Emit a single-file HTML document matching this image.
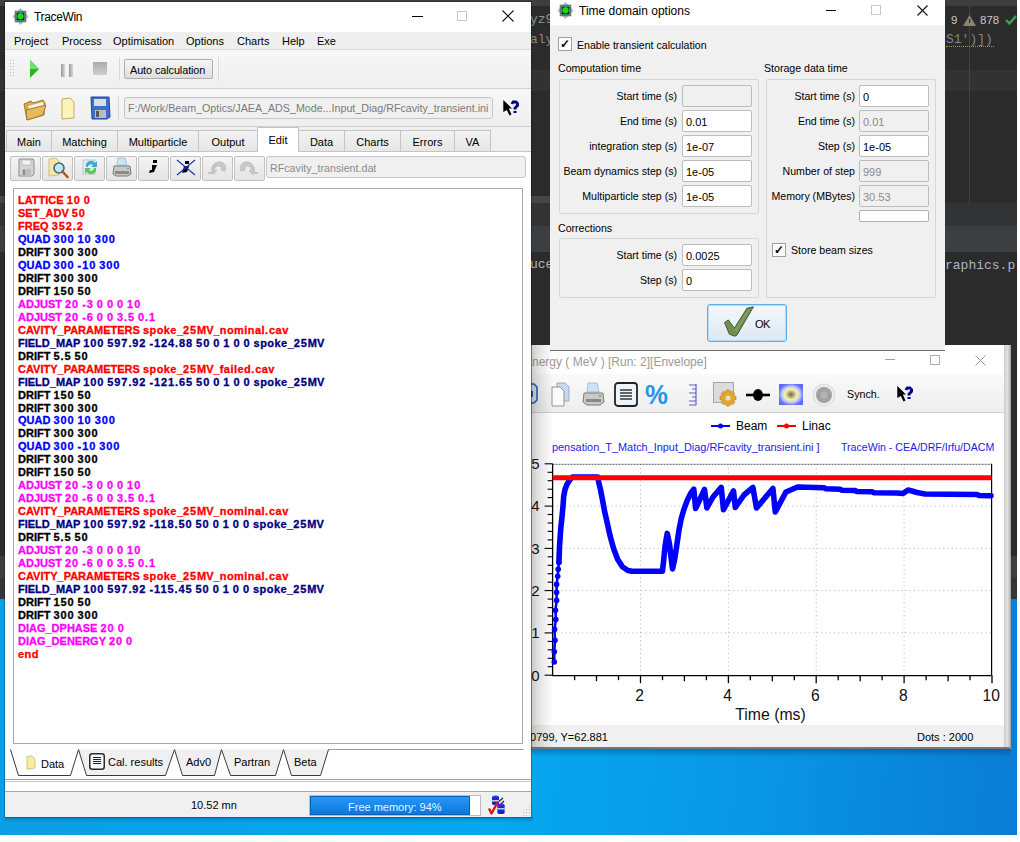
<!DOCTYPE html>
<html><head><meta charset="utf-8">
<style>
*{margin:0;padding:0;box-sizing:border-box}
html,body{width:1020px;height:842px;overflow:hidden;background:#fff;font-family:"Liberation Sans",sans-serif;font-size:11px;color:#000}
.a{position:absolute}
.t{position:absolute;white-space:nowrap;line-height:1}
#ide{left:0;top:0;width:1017px;height:599px;background:#2b2b2b}
#desk{left:0;top:599px;width:1017px;height:236px;background:linear-gradient(95deg,#0a9ee6 0%,#06a8f0 50%,#0898e6 72%,#0a7cd6 100%)}
/* main window */
#mw{left:5px;top:2px;width:526px;height:815px;background:#f0f0f0;box-shadow:0 0 0 1px rgba(0,0,0,.25)}
.btn{position:absolute;background:linear-gradient(#f6f6f6,#dedede);border:1px solid #adadad;border-radius:2px}
.field{position:absolute;background:#f0f0f0;border:1px solid #c5c5c5;border-radius:3px}
.inp{position:absolute;background:#fff;border:1px solid #bcbcbc;border-radius:2px;font-size:11px;padding-left:3px;line-height:22px}
.inp.dis{background:#f0f0f0;color:#8a8a8a}
.tab{position:absolute;top:128px;height:21px;background:linear-gradient(#f2f2f2,#e6e6e6);border:1px solid #c4c4c4;border-bottom:none;text-align:center;line-height:22px;font-size:11px}
.tbb{position:absolute;top:154px;width:31px;height:25px;background:linear-gradient(#f4f4f4,#e4e4e4);border:1px solid #c2c2c2;border-radius:2px}
#ed{left:13px;top:188px;width:510px;height:556px;background:#fff;border:1px solid #a8a8a8;font-weight:bold;font-size:11px;-webkit-text-stroke:.3px currentColor}
#ed i{font-style:normal}#ed i.l{letter-spacing:.45px}#ed i.d{letter-spacing:.9px}
#ed div{height:12.97px;line-height:12.97px;white-space:nowrap}
.r{color:#ff0000}.b{color:#0000ff}.k{color:#000}.n{color:#000080}.m{color:#ff00ff}
/* dialog */
#dlg{left:550px;top:0;width:395px;height:351px;background:#f0f0f0;border-bottom:1px solid #6e6e6e}
.lbl{position:absolute;text-align:right;white-space:nowrap;font-size:10.6px;line-height:23px}
.gb{position:absolute;border:1px solid #d6d6d6;border-radius:2px}
.cb{position:absolute;width:14px;height:14px;background:#fff;border:1px solid #a0a0a0}
/* chart */
#cw{left:531px;top:351px;width:474px;height:397px;background:#fff}
</style></head><body>
<div id="ide" class="a"></div>
<div class="a" style="left:0;top:0;width:1017px;height:6px;background:#3c3f41"></div>
<div class="a" style="left:0;top:70px;width:1017px;height:21px;background:#323232"></div>
<div class="a" style="left:0;top:196px;width:550px;height:7px;background:#464646"></div>
<div class="a" style="left:0;top:203px;width:1017px;height:23px;background:#313335"></div>
<div class="a" style="left:0;top:226px;width:1017px;height:26px;background:#3c3f41"></div>
<div class="a" style="left:0;top:556px;width:1017px;height:22px;background:#3c3f41"></div>
<div class="a" style="left:0;top:578px;width:1017px;height:21px;background:#333537"></div>
<div class="a" style="left:969px;top:6px;width:1px;height:197px;background:#444"></div>
<div class="t" style="left:530px;top:13px;font-family:'Liberation Mono',monospace;font-size:13px;color:#8a9a8a">yz9</div>
<div class="t" style="left:530px;top:33px;font-family:'Liberation Mono',monospace;font-size:13px;color:#8a8a7a">aly</div>
<div class="t" style="left:530px;top:258px;font-family:'Liberation Mono',monospace;font-size:13px;color:#a9b7c6">uce</div>
<div class="t" style="left:945px;top:259px;font-family:'Liberation Mono',monospace;font-size:13px;color:#a9b7c6">raphics.p</div>
<div class="t" style="left:946px;top:33px;font-family:'Liberation Mono',monospace;font-size:13px;color:#7f8a7f">S1')])</div>
<div class="a" style="left:946px;top:46px;width:48px;height:2px;border-top:1px dotted #9a9a5a"></div>
<div class="t" style="left:951px;top:15px;font-size:11.5px;color:#c8c8c8">9</div>
<svg class="a" style="left:963px;top:15px" width="13" height="11"><path d="M6.5 0L13 11H0Z" fill="#8c8470"/><rect x="6" y="4" width="1.2" height="4" fill="#2b2b2b"/></svg>
<div class="t" style="left:980px;top:15px;font-size:11.5px;color:#c8c8c8">878</div>
<svg class="a" style="left:1005px;top:14px" width="12" height="12"><path d="M1 6L4.5 9.5L11 2" stroke="#3fa34d" stroke-width="2.4" fill="none"/></svg>
<div id="desk" class="a"></div>

<div class="a" style="left:531px;top:749px;width:480px;height:8px;background:linear-gradient(rgba(0,20,60,.28),rgba(0,20,60,0))"></div>
<div class="a" style="left:5px;top:817px;width:528px;height:6px;background:linear-gradient(rgba(0,20,60,.22),rgba(0,20,60,0))"></div>
<!-- CHART WINDOW -->
<div class="a" style="left:531px;top:345px;width:480px;height:404px;background:#a8a8a8"></div>
<div class="a" style="left:1004px;top:345px;width:6px;height:403px;background:linear-gradient(90deg,#c9c9c9,#e4e4e4 50%,#bdbdbd)"></div>
<div class="a" style="left:531px;top:345px;width:473px;height:29px;background:#fff"></div>
<div class="t" style="left:524px;top:356px;font-size:12px;color:#9a9a9a">Energy ( MeV ) [Run: 2][Envelope]</div>
<div class="a" style="left:885px;top:359px;width:10px;height:1px;background:#a0a0a0"></div>
<div class="a" style="left:930px;top:355px;width:10px;height:10px;border:1px solid #b0b0b0"></div>
<svg class="a" style="left:975px;top:355px" width="11" height="11"><path d="M0.5 0.5L10.5 10.5M10.5 0.5L0.5 10.5" stroke="#9a9a9a" stroke-width="1"/></svg>
<div class="a" style="left:531px;top:374px;width:473px;height:38px;background:linear-gradient(#fafafa,#eeeeee)"></div>
<div class="a" style="left:531px;top:412px;width:473px;height:1px;background:#cfcfcf"></div>
<div class="a" style="left:531px;top:413px;width:473px;height:312px;background:#fff"></div>
<div class="a" style="left:531px;top:725px;width:473px;height:22px;background:#f0f0f0"></div>
<div class="a" style="left:531px;top:747px;width:479px;height:2px;background:#777"></div>
<!-- chart toolbar icons -->
<svg class="a" style="left:531px;top:383px" width="7" height="21" viewBox="0 0 7 21"><path d="M-10 1H3L6 4V17L3 20H-10Z" fill="#dfe8f6" stroke="#2f5fc0" stroke-width="1.6"/><rect x="-10" y="8" width="12" height="6" fill="#2f5fc0"/></svg>
<svg class="a" style="left:551px;top:382px" width="19" height="25" viewBox="0 0 19 25"><path d="M6 1L14 1L18 5L18 19L6 19Z" fill="#c7d8ef" stroke="#8aa0c0" stroke-width=".8"/><path d="M1 5L9 5L13 9L13 24L1 24Z" fill="#fafafa" stroke="#8a8a8a" stroke-width=".9"/></svg>
<svg class="a" style="left:582px;top:382px" width="23" height="25" viewBox="0 0 23 25"><path d="M6 1L15 1L17 10L5 10Z" fill="#cde4f6" stroke="#8fb0cc" stroke-width=".7"/><path d="M2 11L21 11L22 20L18 23L5 23L1 20Z" fill="#c9c9c9" stroke="#6f6f6f" stroke-width=".9"/><rect x="4" y="17" width="15" height="3" fill="#888"/><rect x="17" y="13" width="2" height="1.5" fill="#3c3"/></svg>
<svg class="a" style="left:614px;top:382px" width="24" height="25" viewBox="0 0 24 25"><rect x="1" y="1" width="22" height="23" rx="3" fill="#eef4fb" stroke="#222" stroke-width="1.8"/><path d="M6 8H18M6 11H18M6 14H18M6 17H18" stroke="#333" stroke-width="1.6"/></svg>
<div class="t" style="left:645px;top:381px;font-size:28px;font-weight:bold;color:#2196e8;letter-spacing:-1px;transform:scaleX(.92);transform-origin:left">%</div>
<svg class="a" style="left:687px;top:383px" width="11" height="23" viewBox="0 0 11 23"><path d="M9 1V22M2 2H9M5 6H9M2 10H9M5 14H9M2 18H9M2 22H9" stroke="#6060c8" stroke-width="1.2" fill="none"/></svg>
<svg class="a" style="left:713px;top:382px" width="24" height="25" viewBox="0 0 24 25"><rect x="0.5" y="0.5" width="20" height="20" fill="#dcdcdc" stroke="#98a8b8"/><g transform="translate(15 16)"><path d="M-1.6 -8H1.6L2.2 -5.6L4.4 -6.8L6.8 -4.4L5.6 -2.2L8 -1.6V1.6L5.6 2.2L6.8 4.4L4.4 6.8L2.2 5.6L1.6 8H-1.6L-2.2 5.6L-4.4 6.8L-6.8 4.4L-5.6 2.2L-8 1.6V-1.6L-5.6 -2.2L-6.8 -4.4L-4.4 -6.8L-2.2 -5.6Z" fill="#e6a628" stroke="#b07818" stroke-width=".6"/><circle r="2.6" fill="#dcdcdc"/></g></svg>
<svg class="a" style="left:746px;top:388px" width="25" height="14" viewBox="0 0 25 14"><path d="M0 7H24" stroke="#000" stroke-width="2.6"/><ellipse cx="12" cy="7" rx="5" ry="6" fill="#000"/></svg>
<svg class="a" style="left:779px;top:384px" width="24" height="21" viewBox="0 0 24 21"><defs><radialGradient id="g1" cx=".5" cy=".5" r=".6"><stop offset="0" stop-color="#6a6a6a"/><stop offset=".22" stop-color="#b8b070"/><stop offset=".42" stop-color="#f8f4a8"/><stop offset=".62" stop-color="#c8ccf4"/><stop offset=".85" stop-color="#6a78f8"/><stop offset="1" stop-color="#5a6af8"/></radialGradient></defs><rect x="0" y="0" width="24" height="21" fill="url(#g1)"/></svg>
<svg class="a" style="left:812px;top:383px" width="24" height="24" viewBox="0 0 24 24"><circle cx="12" cy="12" r="11" fill="#ececec" stroke="#dadada"/><circle cx="12" cy="12" r="8" fill="#a2a2a2"/><circle cx="12" cy="12" r="3.5" fill="#b4b4b4"/></svg>
<div class="t" style="left:847px;top:389px;font-size:10.7px">Synch.</div>
<svg class="a" style="left:894px;top:384px" width="22" height="20" viewBox="0 0 22 20"><path d="M3.3 2L12 10.5L8.8 10.5L11.5 16.5L9.5 17.6L6.8 12L3.3 14Z" fill="#000"/><path d="M10.5 5.5L12.5 2.5H16.5L19 5V8L16.5 10.5V11.5H13.5V9.5L16 7V5.5H13.5V6.5Z" fill="#00008a"/><rect x="13.5" y="13" width="3" height="2" fill="#00008a"/></svg>
<!-- legend & titles -->
<svg class="a" style="left:711px;top:421px" width="20" height="10"><path d="M0 5H19" stroke="#0000ff" stroke-width="2"/><circle cx="9.5" cy="5" r="2.5" fill="#0000ff"/></svg>
<div class="t" style="left:736px;top:420px;font-size:12px">Beam</div>
<svg class="a" style="left:777px;top:421px" width="20" height="10"><path d="M0 5H19" stroke="#ff0000" stroke-width="2"/><circle cx="9.5" cy="5" r="2.5" fill="#ff0000"/></svg>
<div class="t" style="left:802px;top:420px;font-size:12px">Linac</div>
<div class="t" style="left:552px;top:442px;font-size:10.9px;color:#1a1ae6">pensation_T_Match_Input_Diag/RFcavity_transient.ini ]</div>
<div class="t" style="left:841px;top:442px;font-size:10.6px;color:#1a1ae6">TraceWin - CEA/DRF/Irfu/DACM</div>
<!-- PLOT -->
<svg class="a" style="left:0;top:0" width="1020" height="842" viewBox="0 0 1020 842">
<path d="M640.5 463.8V675.2" stroke="#bdbdbd" stroke-width="1" stroke-dasharray="1.2 3"/>
<path d="M728.4 463.8V675.2" stroke="#bdbdbd" stroke-width="1" stroke-dasharray="1.2 3"/>
<path d="M816.2 463.8V675.2" stroke="#bdbdbd" stroke-width="1" stroke-dasharray="1.2 3"/>
<path d="M904.1 463.8V675.2" stroke="#bdbdbd" stroke-width="1" stroke-dasharray="1.2 3"/>
<path d="M552.6 632.9H991.6" stroke="#bdbdbd" stroke-width="1" stroke-dasharray="1.2 3"/>
<path d="M552.6 590.6H991.6" stroke="#bdbdbd" stroke-width="1" stroke-dasharray="1.2 3"/>
<path d="M552.6 548.4H991.6" stroke="#bdbdbd" stroke-width="1" stroke-dasharray="1.2 3"/>
<path d="M552.6 506.1H991.6" stroke="#bdbdbd" stroke-width="1" stroke-dasharray="1.2 3"/>
<path d="M552.6 464.3H991.6" stroke="#555" stroke-width="1" stroke-dasharray="2 1"/>
<path d="M991.6 463.8V675.2" stroke="#000" stroke-width="1.2"/>
<path d="M552.6 463.8V675.7H991.6" stroke="#000" stroke-width="1.3" fill="none"/>
<path d="M544.6 675.2H552.6" stroke="#000" stroke-width="1.1"/>
<path d="M547.6 666.7H552.6" stroke="#000" stroke-width="1.1"/>
<path d="M547.6 658.3H552.6" stroke="#000" stroke-width="1.1"/>
<path d="M547.6 649.8H552.6" stroke="#000" stroke-width="1.1"/>
<path d="M547.6 641.4H552.6" stroke="#000" stroke-width="1.1"/>
<path d="M544.6 632.9H552.6" stroke="#000" stroke-width="1.1"/>
<path d="M547.6 624.5H552.6" stroke="#000" stroke-width="1.1"/>
<path d="M547.6 616.0H552.6" stroke="#000" stroke-width="1.1"/>
<path d="M547.6 607.6H552.6" stroke="#000" stroke-width="1.1"/>
<path d="M547.6 599.1H552.6" stroke="#000" stroke-width="1.1"/>
<path d="M544.6 590.6H552.6" stroke="#000" stroke-width="1.1"/>
<path d="M547.6 582.2H552.6" stroke="#000" stroke-width="1.1"/>
<path d="M547.6 573.7H552.6" stroke="#000" stroke-width="1.1"/>
<path d="M547.6 565.3H552.6" stroke="#000" stroke-width="1.1"/>
<path d="M547.6 556.8H552.6" stroke="#000" stroke-width="1.1"/>
<path d="M544.6 548.4H552.6" stroke="#000" stroke-width="1.1"/>
<path d="M547.6 539.9H552.6" stroke="#000" stroke-width="1.1"/>
<path d="M547.6 531.4H552.6" stroke="#000" stroke-width="1.1"/>
<path d="M547.6 523.0H552.6" stroke="#000" stroke-width="1.1"/>
<path d="M547.6 514.5H552.6" stroke="#000" stroke-width="1.1"/>
<path d="M544.6 506.1H552.6" stroke="#000" stroke-width="1.1"/>
<path d="M547.6 497.6H552.6" stroke="#000" stroke-width="1.1"/>
<path d="M547.6 489.2H552.6" stroke="#000" stroke-width="1.1"/>
<path d="M547.6 480.7H552.6" stroke="#000" stroke-width="1.1"/>
<path d="M547.6 472.3H552.6" stroke="#000" stroke-width="1.1"/>
<path d="M544.6 463.8H552.6" stroke="#000" stroke-width="1.1"/>
<path d="M574.6 675.2V680.2" stroke="#000" stroke-width="1.3"/>
<path d="M596.5 675.2V681.2" stroke="#000" stroke-width="1.3"/>
<path d="M618.5 675.2V680.2" stroke="#000" stroke-width="1.3"/>
<path d="M640.5 675.2V683.2" stroke="#000" stroke-width="1.3"/>
<path d="M662.5 675.2V680.2" stroke="#000" stroke-width="1.3"/>
<path d="M684.4 675.2V681.2" stroke="#000" stroke-width="1.3"/>
<path d="M706.4 675.2V680.2" stroke="#000" stroke-width="1.3"/>
<path d="M728.4 675.2V683.2" stroke="#000" stroke-width="1.3"/>
<path d="M750.3 675.2V680.2" stroke="#000" stroke-width="1.3"/>
<path d="M772.3 675.2V681.2" stroke="#000" stroke-width="1.3"/>
<path d="M794.3 675.2V680.2" stroke="#000" stroke-width="1.3"/>
<path d="M816.2 675.2V683.2" stroke="#000" stroke-width="1.3"/>
<path d="M838.2 675.2V680.2" stroke="#000" stroke-width="1.3"/>
<path d="M860.2 675.2V681.2" stroke="#000" stroke-width="1.3"/>
<path d="M882.1 675.2V680.2" stroke="#000" stroke-width="1.3"/>
<path d="M904.1 675.2V683.2" stroke="#000" stroke-width="1.3"/>
<path d="M926.1 675.2V680.2" stroke="#000" stroke-width="1.3"/>
<path d="M948.1 675.2V681.2" stroke="#000" stroke-width="1.3"/>
<path d="M970.0 675.2V680.2" stroke="#000" stroke-width="1.3"/>
<path d="M992.0 675.2V683.2" stroke="#000" stroke-width="1.3"/>
<text x="539.5" y="680.5" text-anchor="end" font-family="Liberation Sans" font-size="15" fill="#111">0</text>
<text x="539.5" y="638.2" text-anchor="end" font-family="Liberation Sans" font-size="15" fill="#111">1</text>
<text x="539.5" y="595.9" text-anchor="end" font-family="Liberation Sans" font-size="15" fill="#111">2</text>
<text x="539.5" y="553.7" text-anchor="end" font-family="Liberation Sans" font-size="15" fill="#111">3</text>
<text x="539.5" y="511.4" text-anchor="end" font-family="Liberation Sans" font-size="15" fill="#111">4</text>
<text x="539.5" y="469.1" text-anchor="end" font-family="Liberation Sans" font-size="15" fill="#111">5</text>
<text x="639.7" y="700.5" text-anchor="middle" font-family="Liberation Sans" font-size="15.6" fill="#111">2</text>
<text x="727.6" y="700.5" text-anchor="middle" font-family="Liberation Sans" font-size="15.6" fill="#111">4</text>
<text x="815.4" y="700.5" text-anchor="middle" font-family="Liberation Sans" font-size="15.6" fill="#111">6</text>
<text x="903.3" y="700.5" text-anchor="middle" font-family="Liberation Sans" font-size="15.6" fill="#111">8</text>
<text x="991.2" y="700.5" text-anchor="middle" font-family="Liberation Sans" font-size="15.6" fill="#111">10</text>
<text x="770.5" y="719.5" text-anchor="middle" font-family="Liberation Sans" font-size="15.8" fill="#111">Time (ms)</text>
<path d="M554.3 662.0 L554.3 651.8 L555.0 640.2 L554.6 629.4 L555.8 619.4 L555.5 610.2 L556.6 600.4 L556.6 592.4 L556.6 584.4 L557.7 576.2 L558.2 569.3 L558.9 562.3" stroke="#0000ff" stroke-width="2.5" fill="none" stroke-linejoin="round" stroke-linecap="round"/>
<path d="M558.9 562.3 L559.6 544.9 L560.7 529.2 L562.0 516.9 L563.0 506.0 L563.7 496.4 L565.0 489.6 L567.1 484.1 L569.8 480.0 L572.5 477.0 L597.8 477.0 L598.5 481.4 L600.5 489.6 L602.6 500.5 L604.6 511.4 L607.4 523.7 L610.1 536.0 L613.5 548.3 L617.6 559.3 L622.4 566.8 L627.9 570.5 L632.0 571.3 L662.4 571.3 L663.5 562.0 L665.0 546.5 L667.2 533.4 L669.5 544.0 L671.0 557.0 L672.5 569.0 L674.5 560.0 L676.6 546.5 L679.0 530.0 L681.4 518.0 L683.8 509.7 L687.3 500.2 L690.9 493.0 L693.8 489.3 L695.6 508.5 L704.5 489.5 L706.9 507.9 L713.0 497.0 L721.2 487.4 L723.5 509.7 L733.5 490.9 L735.3 507.4 L744.0 495.0 L752.9 487.4 L756.5 508.0 L772.9 488.5 L775.3 512.0 L785.9 492.0 L797.6 487.0 L824.0 487.8 L826.0 488.8 L840.0 489.2 L842.0 490.2 L855.0 490.5 L857.0 491.5 L872.0 491.8 L874.0 492.8 L897.0 493.0 L903.0 493.5 L908.0 490.0 L912.0 491.0 L917.0 492.5 L925.0 494.0 L977.0 494.5 L979.0 495.5 L991.0 495.8" stroke="#0000ff" stroke-width="5.6" fill="none" stroke-linejoin="round" stroke-linecap="round"/>
<circle cx="554.3" cy="662" r="2.8" fill="#0000ff"/>
<circle cx="554.3" cy="651.8" r="2.8" fill="#0000ff"/>
<circle cx="555" cy="640.2" r="2.8" fill="#0000ff"/>
<circle cx="554.6" cy="629.4" r="2.8" fill="#0000ff"/>
<circle cx="555.8" cy="619.4" r="2.8" fill="#0000ff"/>
<circle cx="555.5" cy="610.2" r="2.8" fill="#0000ff"/>
<circle cx="556.6" cy="600.4" r="2.8" fill="#0000ff"/>
<circle cx="556.6" cy="592.4" r="2.8" fill="#0000ff"/>
<circle cx="556.6" cy="584.4" r="2.8" fill="#0000ff"/>
<circle cx="557.7" cy="576.2" r="2.8" fill="#0000ff"/>
<circle cx="558.2" cy="569.3" r="2.8" fill="#0000ff"/>
<circle cx="558.9" cy="562.3" r="2.8" fill="#0000ff"/>
<path d="M552.6 477.8H991.6" stroke="#ff0000" stroke-width="5"/>
</svg>
<!-- /PLOT -->
<!-- status -->
<div class="t" style="left:524px;top:732px;font-size:11px">90799, Y=62.881</div>
<div class="t" style="left:917px;top:732px;font-size:11px">Dots : 2000</div>

<div class="a" style="left:531px;top:345px;width:22px;height:403px;background:linear-gradient(90deg,rgba(0,0,0,.5) 0,rgba(0,0,0,.2) 1.5px,rgba(0,0,0,.12) 30%,rgba(0,0,0,0))"></div>
<!-- MAIN WINDOW -->
<div id="mw" class="a">
  <!-- title bar -->
  <div class="a" style="left:0;top:0;width:526px;height:30px;background:#fff"></div>
  <svg class="a" style="left:7px;top:6px" width="17" height="17" viewBox="0 0 17 17">
    <path d="M8.5 0.5L16 8.5L8.5 16.5L1 8.5Z" fill="#9cc8ef" stroke="#8a9aa8" stroke-width=".6"/>
    <rect x="3.2" y="3.2" width="10.6" height="10.6" fill="#0a140e" stroke="#777" stroke-width="1"/>
    <rect x="4.2" y="4.2" width="8.6" height="8.6" fill="none" stroke="#5fae8a" stroke-width="1"/>
    <circle cx="8.5" cy="8.3" r="3.2" fill="#10dd10"/>
  </svg>
  <div class="t" style="left:29px;top:9px;font-size:12px;letter-spacing:-.35px;color:#000">TraceWin</div>
  <div class="a" style="left:407px;top:14px;width:11px;height:1px;background:#000"></div>
  <div class="a" style="left:452px;top:9px;width:10px;height:10px;border:1px solid #c8c8c8"></div>
  <svg class="a" style="left:497px;top:8px" width="12" height="12"><path d="M0.5 0.5L11.5 11.5M11.5 0.5L0.5 11.5" stroke="#111" stroke-width="1.1"/></svg>
  <!-- menubar -->
  <div class="a" style="left:0;top:30px;width:526px;height:17px;background:#efefef"></div>
  <div class="a" style="left:0;top:47px;width:526px;height:1px;background:#d9d9d9"></div>
  <div class="t" style="left:9px;top:34px">Project</div>
  <div class="t" style="left:57px;top:34px">Process</div>
  <div class="t" style="left:108px;top:34px">Optimisation</div>
  <div class="t" style="left:181px;top:34px">Options</div>
  <div class="t" style="left:232px;top:34px">Charts</div>
  <div class="t" style="left:277px;top:34px">Help</div>
  <div class="t" style="left:312px;top:34px">Exe</div>
  <!-- toolbar 1 -->
  <div class="a" style="left:0;top:48px;width:526px;height:38px;background:linear-gradient(#f7f7f7,#efefef)"></div>
  <div class="a" style="left:0;top:86px;width:526px;height:1px;background:#d0d0d0"></div>
  <svg class="a" style="left:4px;top:57px" width="6" height="20"><g fill="#b8b8b8"><rect x="1" y="1" width="1" height="1"/><rect x="4" y="1" width="1" height="1"/><rect x="1" y="4" width="1" height="1"/><rect x="4" y="4" width="1" height="1"/><rect x="1" y="7" width="1" height="1"/><rect x="4" y="7" width="1" height="1"/><rect x="1" y="10" width="1" height="1"/><rect x="4" y="10" width="1" height="1"/><rect x="1" y="13" width="1" height="1"/><rect x="4" y="13" width="1" height="1"/><rect x="1" y="16" width="1" height="1"/><rect x="4" y="16" width="1" height="1"/></g></svg>
  <svg class="a" style="left:4px;top:96px" width="6" height="20"><g fill="#b8b8b8"><rect x="1" y="1" width="1" height="1"/><rect x="4" y="1" width="1" height="1"/><rect x="1" y="4" width="1" height="1"/><rect x="4" y="4" width="1" height="1"/><rect x="1" y="7" width="1" height="1"/><rect x="4" y="7" width="1" height="1"/><rect x="1" y="10" width="1" height="1"/><rect x="4" y="10" width="1" height="1"/><rect x="1" y="13" width="1" height="1"/><rect x="4" y="13" width="1" height="1"/><rect x="1" y="16" width="1" height="1"/><rect x="4" y="16" width="1" height="1"/></g></svg>
  <svg class="a" style="left:24px;top:57px" width="11" height="20"><path d="M1 1L10 10L1 19Z" fill="#22b722"/><path d="M1 1L10 10L1 10Z" fill="#6fe06f"/></svg>
  <div class="a" style="left:56px;top:62px;width:4px;height:13px;background:linear-gradient(90deg,#999,#d8d8d8)"></div>
  <div class="a" style="left:64px;top:62px;width:4px;height:13px;background:linear-gradient(90deg,#999,#d8d8d8)"></div>
  <div class="a" style="left:88px;top:60px;width:14px;height:13px;background:linear-gradient(#aaa,#d0d0d0)"></div>
  <div class="a" style="left:114px;top:55px;width:1px;height:24px;background:#d8d8d8"></div>
  <div class="btn" style="left:119px;top:57px;width:89px;height:20px"></div>
  <div class="t" style="left:125px;top:63px;font-size:10.9px;letter-spacing:-.1px">Auto calculation</div>
  <div class="a" style="left:213px;top:55px;width:1px;height:24px;background:#d8d8d8"></div>
  <!-- toolbar 2 -->
  <div class="a" style="left:0;top:87px;width:526px;height:37px;background:linear-gradient(#f7f7f7,#efefef)"></div>
  <div class="a" style="left:0;top:124px;width:526px;height:1px;background:#d0d0d0"></div>
  <svg class="a" style="left:17px;top:94px" width="26" height="26" viewBox="0 0 26 26">
    <path d="M2 8L9 5L11 7L21 4L23 7L22 19L5 24Z" fill="#d9a84a" stroke="#a57a2a" stroke-width="1"/>
    <path d="M6 10L21 6L22 11L8 18Z" fill="#f2f2f2"/>
    <path d="M4 14L24 9L21 19L5 24Z" fill="#e8b95a" stroke="#a57a2a" stroke-width="1"/>
  </svg>
  <svg class="a" style="left:56px;top:95px" width="14" height="23" viewBox="0 0 14 23"><path d="M1 2L9 1L13 5L13 21L1 22Z" fill="#fbf4b8" stroke="#c9a85a" stroke-width="1"/></svg>
  <svg class="a" style="left:85px;top:94px" width="21" height="24" viewBox="0 0 21 24"><path d="M1 1L19 1L20 21L17 23L2 23Z" fill="#3d6fd0" stroke="#23439a"/><rect x="4" y="3" width="12" height="7" fill="#ddd"/><rect x="5" y="14" width="11" height="8" fill="#bbb"/><rect x="6" y="15" width="3" height="6" fill="#555"/></svg>
  <div class="a" style="left:113px;top:94px;width:1px;height:24px;background:#d8d8d8"></div>
  <div class="field" style="left:119px;top:95px;width:369px;height:22px"></div>
  <div class="t" style="left:123px;top:101px;font-size:10.7px;color:#7a7a7a">F:/Work/Beam_Optics/JAEA_ADS_Mode...Input_Diag/RFcavity_transient.ini</div>
  <svg class="a" style="left:495px;top:96px" width="22" height="20" viewBox="0 0 22 20"><path d="M3.3 2L12 10.5L8.8 10.5L11.5 16.5L9.5 17.6L6.8 12L3.3 14Z" fill="#000"/><path d="M10.5 5.5L12.5 2.5H16.5L19 5V8L16.5 10.5V11.5H13.5V9.5L16 7V5.5H13.5V6.5Z" fill="#00008a"/><rect x="13.5" y="13" width="3" height="2" fill="#00008a"/></svg>
  <!-- tabs -->
  <div class="a" style="left:0;top:149px;width:526px;height:1px;background:#c4c4c4"></div>
  <div class="tab" style="left:1px;width:46px">Main</div>
  <div class="tab" style="left:46px;width:67px">Matching</div>
  <div class="tab" style="left:112px;width:82px">Multiparticle</div>
  <div class="tab" style="left:193px;width:60px">Output</div>
  <div class="tab" style="left:293px;width:47px">Data</div>
  <div class="tab" style="left:339px;width:57px">Charts</div>
  <div class="tab" style="left:395px;width:55px">Errors</div>
  <div class="tab" style="left:449px;width:37px">VA</div>
  <div class="tab" style="left:252px;top:125px;width:42px;height:25px;background:#fff;line-height:24px">Edit</div>
  <div class="a" style="left:0;top:150px;width:526px;height:665px;background:#fff"></div>
  <!-- edit toolbar -->
  <div class="tbb" style="left:5px"></div>
  <div class="tbb" style="left:37px"></div>
  <div class="tbb" style="left:69px"></div>
  <div class="tbb" style="left:101px"></div>
  <div class="tbb" style="left:133px"></div>
  <div class="tbb" style="left:165px"></div>
  <div class="tbb" style="left:197px"></div>
  <div class="tbb" style="left:229px"></div>
  <!-- icons -->
  <svg class="a" style="left:13px;top:156px" width="17" height="19" viewBox="0 0 17 19"><path d="M1 1L15 1L16 3L16 16L14 18L1 18Z" fill="#d4d4d4" stroke="#8c8c8c"/><rect x="4" y="2" width="9" height="5" fill="#f2f2f2" stroke="#aaa" stroke-width=".6"/><rect x="4" y="11" width="9" height="7" fill="#bdbdbd"/><rect x="5" y="12" width="2" height="5" fill="#8a8a8a"/></svg>
  <svg class="a" style="left:43px;top:155px" width="21" height="22" viewBox="0 0 21 22"><path d="M1 2L8 1L11 4L11 18L1 19Z" fill="#f6e7a8" stroke="#cbb06a" stroke-width=".8"/><circle cx="11" cy="11" r="5" fill="#bfe6f6" stroke="#3a6a7a" stroke-width="1.6"/><path d="M14.5 14.5L19.5 20" stroke="#a85a20" stroke-width="2.6" stroke-linecap="round"/></svg>
  <svg class="a" style="left:77px;top:156px" width="18" height="19" viewBox="0 0 18 19"><rect x="1" y="2" width="12" height="14" fill="#e8eef4" stroke="#9ab" stroke-width=".6"/><path d="M4 9A5 5 0 0 1 13 5L15 3L15 9L9 9L11 7A3 3 0 0 0 6 9Z" fill="#3ea8d8"/><path d="M14 10A5 5 0 0 1 5 14L3 16L3 10L9 10L7 12A3 3 0 0 0 12 10Z" fill="#5cc85c"/></svg>
  <svg class="a" style="left:107px;top:155px" width="20" height="21" viewBox="0 0 20 21"><path d="M6 1L13 1L15 8L5 8Z" fill="#cde4f6" stroke="#8fb0cc" stroke-width=".7"/><path d="M2 9L18 9L19 17L16 19L4 19L1 17Z" fill="#c9c9c9" stroke="#6f6f6f" stroke-width=".9"/><rect x="3" y="14" width="14" height="3" fill="#8b8b8b"/><rect x="15" y="11" width="2" height="1" fill="#3c3"/></svg>
  <svg class="a" style="left:143px;top:157px" width="10" height="15" viewBox="0 0 10 15"><rect x="5" y="1" width="4" height="3" fill="#000"/><path d="M4 6L9 6L6 13L1 14L2 11L4 11Z" fill="#000"/></svg>
  <svg class="a" style="left:171px;top:157px" width="20" height="17" viewBox="0 0 20 17"><rect x="9" y="2" width="4" height="3" fill="#000"/><path d="M8 7L13 7L11 13L6 14L7 11Z" fill="#000"/><path d="M1 1L19 16M19 1L1 16" stroke="#1f2fa8" stroke-width="1.1"/></svg>
  <svg class="a" style="left:202px;top:157px" width="21" height="16" viewBox="0 0 21 16"><path d="M5 13C3 7 9 2 14 3C18 4 20 8 18 12L14 11C15 9 14 7 12 7C9 7 7 9 8 12L10 11L7 15L1 14Z" fill="#c8c8c8" stroke="#b0b0b0" stroke-width=".6"/></svg>
  <svg class="a" style="left:233px;top:157px" width="21" height="16" viewBox="0 0 21 16"><path d="M16 13C18 7 12 2 7 3C3 4 1 8 3 12L7 11C6 9 7 7 9 7C12 7 14 9 13 12L11 11L14 15L20 14Z" fill="#c8c8c8" stroke="#b0b0b0" stroke-width=".6"/></svg>
  <div class="field" style="left:261px;top:154px;width:260px;height:22px"></div>
  <div class="t" style="left:265px;top:161px;font-size:10.7px;color:#8a8a8a">RFcavity_transient.dat</div>
  <!-- bottom tabs -->
  <svg class="a" style="left:0;top:743px" width="526" height="36" viewBox="0 0 526 36">
    <path d="M323.5 4.5L518.5 4.5" stroke="#9a9a9a" fill="none"/>
    <path d="M5.5 4.5L13.5 30.5L65.5 30.5L73.5 4.5" fill="#fdfdfd" stroke="#3a3a3a" stroke-width="1"/>
    <path d="M73.5 4.5L81.5 30.5L160.5 30.5L169.5 4.5" fill="#f0f0f0" stroke="#3a3a3a" stroke-width="1"/>
    <path d="M169.5 4.5L177.5 30.5L209.5 30.5L216.5 4.5" fill="#f0f0f0" stroke="#3a3a3a" stroke-width="1"/>
    <path d="M216.5 4.5L225.5 30.5L270.5 30.5L278.5 4.5" fill="#f0f0f0" stroke="#3a3a3a" stroke-width="1"/>
    <path d="M278.5 4.5L286.5 30.5L315.5 30.5L323.5 4.5" fill="#f0f0f0" stroke="#3a3a3a" stroke-width="1"/>
  </svg>
  <svg class="a" style="left:21px;top:753px" width="10" height="15" viewBox="0 0 10 15"><path d="M1 1.5L6 1L9 4L9 13L1 14Z" fill="#f7eea0" stroke="#c9b66a" stroke-width=".8"/></svg>
  <div class="t" style="left:36px;top:757px;font-size:11px">Data</div>
  <svg class="a" style="left:84px;top:751px" width="16" height="17" viewBox="0 0 16 17"><rect x="0.75" y="0.75" width="14.5" height="15.5" rx="2.5" fill="#f4f8fd" stroke="#2a2a2a" stroke-width="1.5"/><path d="M4 4.5H12M4 6.5H12M4 8.5H12M4 10.5H12" stroke="#222" stroke-width="1"/></svg>
  <div class="t" style="left:103px;top:755px;font-size:11px">Cal. results</div>
  <div class="t" style="left:181px;top:755px;font-size:11px">Adv0</div>
  <div class="t" style="left:229px;top:755px;font-size:11px">Partran</div>
  <div class="t" style="left:289px;top:755px;font-size:11px">Beta</div>
  <!-- bottom lines / status -->
  <div class="a" style="left:0;top:777px;width:526px;height:1px;background:#a0a0a0"></div>
  <div class="a" style="left:0;top:779px;width:526px;height:1px;background:#c8c8c8"></div>
  <div class="a" style="left:0;top:789px;width:526px;height:1px;background:#a8a8a8"></div>
  <div class="a" style="left:0;top:790px;width:526px;height:25px;background:#f0f0f0"></div>
  <div class="t" style="left:186px;top:798px;font-size:11px">10.52 mn</div>
  <div class="a" style="left:304px;top:793px;width:172px;height:21px;background:#fff;border:1px solid #bcbcbc"></div>
  <div class="a" style="left:305px;top:794px;width:160px;height:19px;background:linear-gradient(#2a95f5,#0a78e0);border:1px solid #0b5fb8"></div>
  <div class="t" style="left:343px;top:800px;font-size:11px;color:#eaf4ff">Free memory: 94%</div>
  <svg class="a" style="left:482px;top:792px" width="22" height="22" viewBox="0 0 22 22"><path d="M10 9L16 4M13 11L17 7" stroke="#222" stroke-width="1.2"/><ellipse cx="8.5" cy="3.5" rx="3.5" ry="2" fill="#2a3ae0"/><rect x="5" y="3.5" width="7" height="6" fill="#1a2ad0"/><rect x="5" y="6" width="7" height="1.5" fill="#c8c8d8"/><ellipse cx="8.5" cy="9.5" rx="3.5" ry="1.6" fill="#1a22b0"/><ellipse cx="14" cy="11.5" rx="3.6" ry="2" fill="#2a3ae0"/><rect x="10.4" y="11.5" width="7.2" height="7" fill="#1a2ad0"/><rect x="10.4" y="14" width="7.2" height="1.5" fill="#c8c8d8"/><ellipse cx="14" cy="18.5" rx="3.6" ry="1.6" fill="#1a22b0"/><path d="M2 14.5L4.5 19.5L10.5 8.5" stroke="#d81818" stroke-width="2.4" fill="none" stroke-linejoin="round"/></svg>
  <svg class="a" style="left:516px;top:804px" width="10" height="10"><g fill="#b8b8b8"><rect x="8" y="0" width="1" height="1"/><rect x="5" y="3" width="1" height="1"/><rect x="8" y="3" width="1" height="1"/><rect x="2" y="6" width="1" height="1"/><rect x="5" y="6" width="1" height="1"/><rect x="8" y="6" width="1" height="1"/><rect x="-1" y="9" width="1" height="1"/><rect x="2" y="9" width="1" height="1"/><rect x="5" y="9" width="1" height="1"/><rect x="8" y="9" width="1" height="1"/></g></svg>

</div>

<div id="ed" class="a" style="padding:5px 0 0 4px">
<div class="r">LATTICE <i class="d">10</i> <i class="d">0</i></div>
<div class="r">SET_ADV <i class="d">50</i></div>
<div class="r">FREQ <i class="d">352.2</i></div>
<div class="b">QUAD <i class="d">300</i> <i class="d">10</i> <i class="d">300</i></div>
<div class="k">DRIFT <i class="d">300</i> <i class="d">300</i></div>
<div class="b">QUAD <i class="d">300</i> <i class="d">-10</i> <i class="d">300</i></div>
<div class="k">DRIFT <i class="d">300</i> <i class="d">300</i></div>
<div class="k">DRIFT <i class="d">150</i> <i class="d">50</i></div>
<div class="m">ADJUST <i class="d">20</i> <i class="d">-3</i> <i class="d">0</i> <i class="d">0</i> <i class="d">0</i> <i class="d">10</i></div>
<div class="m">ADJUST <i class="d">20</i> <i class="d">-6</i> <i class="d">0</i> <i class="d">0</i> <i class="d">3.5</i> <i class="d">0.1</i></div>
<div class="r">CAVITY_PARAMETERS <i class="l">spoke</i>_<i class="d">25</i>MV_<i class="l">nominal</i><i class="d">.</i><i class="l">cav</i></div>
<div class="n">FIELD_MAP <i class="d">100</i> <i class="d">597.92</i> <i class="d">-124.88</i> <i class="d">50</i> <i class="d">0</i> <i class="d">1</i> <i class="d">0</i> <i class="d">0</i> <i class="l">spoke</i>_<i class="d">25</i>MV</div>
<div class="k">DRIFT <i class="d">5.5</i> <i class="d">50</i></div>
<div class="r">CAVITY_PARAMETERS <i class="l">spoke</i>_<i class="d">25</i>MV_<i class="l">failed</i><i class="d">.</i><i class="l">cav</i></div>
<div class="n">FIELD_MAP <i class="d">100</i> <i class="d">597.92</i> <i class="d">-121.65</i> <i class="d">50</i> <i class="d">0</i> <i class="d">1</i> <i class="d">0</i> <i class="d">0</i> <i class="l">spoke</i>_<i class="d">25</i>MV</div>
<div class="k">DRIFT <i class="d">150</i> <i class="d">50</i></div>
<div class="k">DRIFT <i class="d">300</i> <i class="d">300</i></div>
<div class="b">QUAD <i class="d">300</i> <i class="d">10</i> <i class="d">300</i></div>
<div class="k">DRIFT <i class="d">300</i> <i class="d">300</i></div>
<div class="b">QUAD <i class="d">300</i> <i class="d">-10</i> <i class="d">300</i></div>
<div class="k">DRIFT <i class="d">300</i> <i class="d">300</i></div>
<div class="k">DRIFT <i class="d">150</i> <i class="d">50</i></div>
<div class="m">ADJUST <i class="d">20</i> <i class="d">-3</i> <i class="d">0</i> <i class="d">0</i> <i class="d">0</i> <i class="d">10</i></div>
<div class="m">ADJUST <i class="d">20</i> <i class="d">-6</i> <i class="d">0</i> <i class="d">0</i> <i class="d">3.5</i> <i class="d">0.1</i></div>
<div class="r">CAVITY_PARAMETERS <i class="l">spoke</i>_<i class="d">25</i>MV_<i class="l">nominal</i><i class="d">.</i><i class="l">cav</i></div>
<div class="n">FIELD_MAP <i class="d">100</i> <i class="d">597.92</i> <i class="d">-118.50</i> <i class="d">50</i> <i class="d">0</i> <i class="d">1</i> <i class="d">0</i> <i class="d">0</i> <i class="l">spoke</i>_<i class="d">25</i>MV</div>
<div class="k">DRIFT <i class="d">5.5</i> <i class="d">50</i></div>
<div class="m">ADJUST <i class="d">20</i> <i class="d">-3</i> <i class="d">0</i> <i class="d">0</i> <i class="d">0</i> <i class="d">10</i></div>
<div class="m">ADJUST <i class="d">20</i> <i class="d">-6</i> <i class="d">0</i> <i class="d">0</i> <i class="d">3.5</i> <i class="d">0.1</i></div>
<div class="r">CAVITY_PARAMETERS <i class="l">spoke</i>_<i class="d">25</i>MV_<i class="l">nominal</i><i class="d">.</i><i class="l">cav</i></div>
<div class="n">FIELD_MAP <i class="d">100</i> <i class="d">597.92</i> <i class="d">-115.45</i> <i class="d">50</i> <i class="d">0</i> <i class="d">1</i> <i class="d">0</i> <i class="d">0</i> <i class="l">spoke</i>_<i class="d">25</i>MV</div>
<div class="k">DRIFT <i class="d">150</i> <i class="d">50</i></div>
<div class="k">DRIFT <i class="d">300</i> <i class="d">300</i></div>
<div class="m">DIAG_DPHASE <i class="d">20</i> <i class="d">0</i></div>
<div class="m">DIAG_DENERGY <i class="d">20</i> <i class="d">0</i></div>
<div class="r"><i class="l">end</i></div>
</div>

<!-- DIALOG -->
<div id="dlg" class="a">
  <div class="a" style="left:0;top:0;width:395px;height:25px;background:#fff"></div>
  <svg class="a" style="left:7px;top:2px" width="17" height="17" viewBox="0 0 17 17">
    <path d="M8.5 0.5L16 8.5L8.5 16.5L1 8.5Z" fill="#9cc8ef" stroke="#8a9aa8" stroke-width=".6"/>
    <rect x="3.2" y="3.2" width="10.6" height="10.6" fill="#0a140e" stroke="#777" stroke-width="1"/>
    <rect x="4.2" y="4.2" width="8.6" height="8.6" fill="none" stroke="#5fae8a" stroke-width="1"/>
    <circle cx="8.5" cy="8.3" r="3.2" fill="#10dd10"/>
  </svg>
  <div class="t" style="left:29px;top:5px;font-size:12px">Time domain options</div>
  <div class="a" style="left:276px;top:10px;width:10px;height:1px;background:#000"></div>
  <div class="a" style="left:321px;top:5px;width:10px;height:10px;border:1px solid #c8c8c8"></div>
  <svg class="a" style="left:367px;top:5px" width="11" height="11"><path d="M0.5 0.5L10.5 10.5M10.5 0.5L0.5 10.5" stroke="#111" stroke-width="1.1"/></svg>

  <div class="cb" style="left:8px;top:37px"></div>
  <div class="t" style="left:10px;top:38px;font-size:12px;font-weight:bold">&#10003;</div>
  <div class="t" style="left:27px;top:40px;font-size:10.6px">Enable transient calculation</div>
  <div class="t" style="left:8px;top:63px;font-size:10.6px">Computation time</div>
  <div class="t" style="left:214px;top:63px;font-size:10.6px">Storage data time</div>

  <div class="gb" style="left:9px;top:79px;width:200px;height:135px"></div>
  <div class="gb" style="left:216px;top:79px;width:170px;height:219px"></div>

  <div class="lbl" style="right:268px;top:85px">Start time (s)</div>
  <div class="inp dis" style="left:132px;top:85px;width:70px;height:22px"></div>
  <div class="lbl" style="right:268px;top:110px">End time (s)</div>
  <div class="inp" style="left:132px;top:110px;width:70px;height:22px">0.01</div>
  <div class="lbl" style="right:268px;top:135px">integration step (s)</div>
  <div class="inp" style="left:132px;top:135px;width:70px;height:22px">1e-07</div>
  <div class="lbl" style="right:268px;top:160px">Beam dynamics step (s)</div>
  <div class="inp" style="left:132px;top:160px;width:70px;height:22px">1e-05</div>
  <div class="lbl" style="right:268px;top:185px">Multiparticle step (s)</div>
  <div class="inp" style="left:132px;top:185px;width:70px;height:22px">1e-05</div>

  <div class="lbl" style="right:90px;top:85px">Start time (s)</div>
  <div class="inp" style="left:309px;top:85px;width:70px;height:22px">0</div>
  <div class="lbl" style="right:90px;top:110px">End time (s)</div>
  <div class="inp dis" style="left:309px;top:110px;width:70px;height:22px">0.01</div>
  <div class="lbl" style="right:90px;top:135px">Step (s)</div>
  <div class="inp" style="left:309px;top:135px;width:70px;height:22px">1e-05</div>
  <div class="lbl" style="right:90px;top:160px">Number of step</div>
  <div class="inp dis" style="left:309px;top:160px;width:70px;height:22px">999</div>
  <div class="lbl" style="right:90px;top:185px">Memory (MBytes)</div>
  <div class="inp dis" style="left:309px;top:185px;width:70px;height:22px">30.53</div>
  <div class="a" style="left:309px;top:210px;width:70px;height:12px;background:#fff;border:1px solid #b0b0b0;border-radius:2px"></div>

  <div class="t" style="left:8px;top:223px;font-size:10.6px">Corrections</div>
  <div class="gb" style="left:9px;top:238px;width:200px;height:60px"></div>
  <div class="lbl" style="right:268px;top:244px">Start time (s)</div>
  <div class="inp" style="left:132px;top:244px;width:70px;height:22px">0.0025</div>
  <div class="lbl" style="right:268px;top:269px">Step (s)</div>
  <div class="inp" style="left:132px;top:269px;width:70px;height:22px">0</div>

  <div class="cb" style="left:222px;top:243px"></div>
  <div class="t" style="left:224px;top:244px;font-size:12px;font-weight:bold">&#10003;</div>
  <div class="t" style="left:241px;top:245px;font-size:10.6px">Store beam sizes</div>

  <div class="a" style="left:157px;top:304px;width:80px;height:38px;background:linear-gradient(#f4f8fc,#dde8f3);border:1px solid #5aaef0;box-shadow:inset 0 0 0 1px #b8dcf8;border-radius:3px"></div>
  <svg class="a" style="left:172px;top:306px" width="34" height="34" viewBox="0 0 34 34"><path d="M2.5 16.5L6.4 14L12.3 22.3L25 2.2L31.4 0.8L15 29L12.8 30.2L7.4 28.2Z" fill="#728e52" stroke="#45592e" stroke-width="1" stroke-linejoin="round"/><path d="M6 15.5L12.3 24.5L26 3.5L29 2.5L14 26Z" fill="#8aa86a" opacity=".6"/></svg>
  <div class="t" style="left:205px;top:319px;font-size:11px;letter-spacing:-.5px">OK</div>
</div>

</body></html>
